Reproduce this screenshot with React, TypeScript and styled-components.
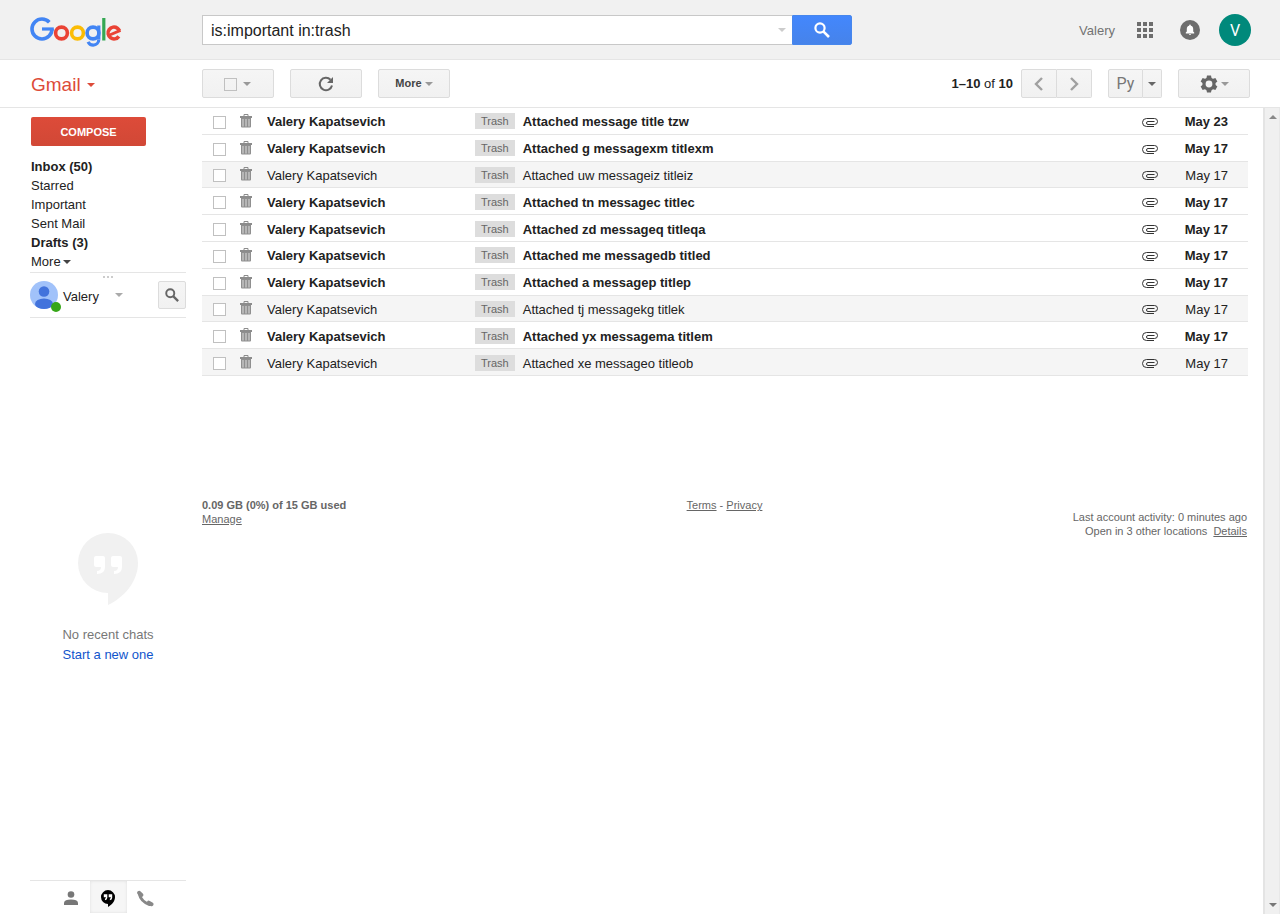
import React from 'react';
import styled, { createGlobalStyle, css } from 'styled-components';

const GlobalStyle = createGlobalStyle`
  *, *::before, *::after { box-sizing: border-box; }
  body {
    margin: 0;
    background: #fff;
    color: #222;
    font-family: Arial, "Liberation Sans", sans-serif;
    font-size: 13px;
    line-height: 19px;
  }
  button, input { font: inherit; color: inherit; margin: 0; }
  button { cursor: pointer; }
  svg { display: block; flex: none; }
`;

const Page = styled.div`
  min-height: 100vh;
  display: flex;
  flex-direction: column;
`;

const TopBar = styled.header`
  display: flex;
  align-items: center;
  height: 60px;
  background: #f1f1f1;
  border-bottom: 1px solid #e5e5e5;
`;

const Brand = styled.div`
  flex: none;
  width: 202px;
  padding-left: 30px;
`;

const LogoLink = styled.a`
  display: flex;
  padding-top: 4px;
`;

const SearchForm = styled.form`
  display: flex;
  flex: 0 1 650px;
  height: 30px;
`;

const SearchField = styled.div`
  flex: 1;
  display: flex;
  align-items: center;
  background: #fff;
  border: 1px solid #c8c8c8;
  border-right: 0;
`;

const SearchInput = styled.input`
  flex: 1;
  min-width: 0;
  height: 28px;
  padding: 2px 8px 0;
  border: 0;
  outline: 0;
  background: transparent;
  font-size: 16px;
`;

const BareButton = styled.button`
  display: flex;
  align-items: center;
  justify-content: center;
  padding: 0 6px;
  border: 0;
  background: none;
`;

const SearchButton = styled.button`
  display: flex;
  align-items: center;
  justify-content: center;
  width: 60px;
  padding: 0;
  border: 1px solid #4787ed;
  border-radius: 0 2px 2px 0;
  background: linear-gradient(#4387fd, #4683ea);
`;

const Account = styled.div`
  display: flex;
  align-items: center;
  margin-left: auto;
  padding-right: 29px;
`;

const AccountName = styled.a`
  margin-right: 22px;
  padding-top: 2px;
  color: #737373;
  text-decoration: none;
`;

const IconButton = styled.button<{ $gap: number }>`
  display: flex;
  padding: 0;
  border: 0;
  background: none;
  margin-right: ${p => p.$gap}px;
`;

const Avatar = styled.button`
  width: 32px;
  height: 32px;
  padding: 1px 0 0;
  border: 0;
  border-radius: 50%;
  background: #00897b;
  color: #fff;
  font-family: Roboto, sans-serif;
  font-size: 16px;
`;

const Caret = styled.span<{ $color?: string }>`
  display: inline-block;
  width: 0;
  height: 0;
  border: 4px solid transparent;
  border-top-color: ${p => p.$color ?? '#999'};
  border-bottom: 0;
`;

const Toolbar = styled.div`
  display: flex;
  align-items: center;
  height: 48px;
  border-bottom: 1px solid #e5e5e5;
  padding-right: 30px;
`;

const ProductButton = styled.button`
  display: flex;
  align-items: center;
  gap: 6px;
  padding: 2px 1px 0;
  border: 0;
  background: none;
  color: #dd4b39;
  font-size: 19px;
`;

const buttonFace = css`
  display: flex;
  align-items: center;
  justify-content: center;
  height: 29px;
  padding: 0;
  border: 1px solid #dcdcdc;
  border-radius: 2px;
  background: linear-gradient(#f5f5f5, #f1f1f1);
  color: #444;
`;

const Tools = styled.div`
  display: flex;
  gap: 16px;
`;

const ToolButton = styled.button`
  ${buttonFace}
  width: 72px;
  gap: 3px;
  font-size: 11px;
  font-weight: bold;
`;

const SelectAll = styled.div`
  ${buttonFace}
  width: 72px;
  padding: 1px 0 0 5px;
`;

const Check = styled.input.attrs({ type: 'checkbox' })<{ $clear?: boolean }>`
  appearance: none;
  display: block;
  width: 13px;
  height: 13px;
  border: 1px solid #c0c0c0;
  background: ${p => (p.$clear ? 'transparent' : '#fff')};
`;

const RightTools = styled.div`
  display: flex;
  align-items: center;
  gap: 16px;
  margin-left: auto;
`;

const Pager = styled.div`
  display: flex;
  align-items: center;
`;

const Range = styled.span`
  margin-right: 8px;
`;

const Segment = styled.button<{ $side: 'left' | 'right'; $width: number }>`
  ${buttonFace}
  width: ${p => p.$width}px;
  font-family: Roboto, sans-serif;
  font-size: 16px;
  color: #777;
  ${p => p.$side === 'left'
    ? 'border-radius: 2px 0 0 2px;'
    : 'border-radius: 0 2px 2px 0; border-left: 0;'}
`;

const Body = styled.div`
  flex: 1;
  display: flex;
`;

const Sidebar = styled.aside`
  flex: none;
  width: 202px;
  padding: 9px 16px 0 30px;
  display: flex;
  flex-direction: column;
`;

const Compose = styled.button`
  width: 115px;
  height: 29px;
  margin-left: 1px;
  padding: 1px 0 0;
  border: 0;
  border-radius: 2px;
  background: linear-gradient(#dd4b39, #d14836);
  color: #fff;
  font-size: 11px;
  font-weight: bold;
`;

const Folders = styled.nav`
  display: flex;
  flex-direction: column;
  align-items: flex-start;
  padding: 11px 1px 1px;
  border-bottom: 1px solid #e5e5e5;
`;

const Folder = styled.a<{ $bold?: boolean }>`
  color: #222;
  text-decoration: none;
  font-weight: ${p => (p.$bold ? 'bold' : 'normal')};
`;

const MoreFolders = styled.button`
  display: flex;
  align-items: center;
  gap: 2px;
  padding: 0;
  border: 0;
  background: none;
`;

const Grip = styled.div`
  display: flex;
  justify-content: center;
  gap: 2px;
  padding-top: 3px;
  height: 8px;

  span { width: 2px; height: 2px; background: #ccc; }
`;

const ChatHead = styled.div`
  display: flex;
  align-items: center;
  padding-bottom: 8px;
  border-bottom: 1px solid #e5e5e5;
`;

const ChatUser = styled.button`
  display: flex;
  align-items: center;
  gap: 5px;
  padding: 0;
  border: 0;
  background: none;
`;

const Face = styled.span`
  position: relative;
`;

const Presence = styled.span`
  position: absolute;
  right: -3px;
  bottom: -3px;
  width: 10px;
  height: 10px;
  border-radius: 50%;
  background: #36a618;
`;

const ChatName = styled.span`
  width: 47px;
  padding-top: 2px;
  text-align: left;
`;

const ChatSearch = styled.button`
  ${buttonFace}
  width: 28px;
  height: 28px;
  margin-left: auto;
`;

const NoChats = styled.div`
  flex: 1;
  display: flex;
  flex-direction: column;
  align-items: center;
  justify-content: center;
  line-height: 20px;
  color: #777;

  p { margin: 20px 0 0; }
  a { color: #15c; text-decoration: none; }
`;

const ChatTabs = styled.div`
  display: flex;
  justify-content: center;
  height: 34px;
  padding-bottom: 1px;
  border-top: 1px solid #e5e5e5;
`;

const ChatTab = styled.button<{ $active?: boolean }>`
  display: flex;
  align-items: center;
  justify-content: center;
  width: 37px;
  padding: 2px 0 0;
  border: 0;
  background: ${p => (p.$active ? '#f6f6f6' : 'none')};
  box-shadow: ${p => (p.$active ? 'inset 0 0 3px #ddd' : 'none')};
`;

const Main = styled.main`
  flex: 1;
  min-width: 0;
  padding-right: 15px;
`;

const MailTable = styled.table`
  width: 100%;
  height: 268px;
  table-layout: fixed;
  border-collapse: separate;
  border-spacing: 0;
`;

const Row = styled.tr<{ $unread: boolean }>`
  background: ${p => (p.$unread ? '#fff' : '#f5f5f5')};
  font-weight: ${p => (p.$unread ? 'bold' : 'normal')};
`;

const Cell = styled.td<{ $align?: string }>`
  height: 26px;
  padding: 2px 0 0;
  border-bottom: 1px solid #e5e5e5;
  text-align: ${p => p.$align ?? 'left'};
  white-space: nowrap;
  overflow: hidden;
  text-overflow: ellipsis;
`;

const CheckCell = styled(Cell)`
  padding: 3px 0 0 11px;
`;

const TrashCell = styled(Cell)`
  padding: 0;
`;

const ClipCell = styled(Cell)`
  padding: 3px 0 0 2px;
`;

const DateCell = styled(Cell)`
  padding-right: 20px;
`;

const Label = styled.span`
  display: inline-block;
  height: 16px;
  margin-right: 8px;
  padding: 0 6px;
  background: #ddd;
  color: #666;
  font-size: 11px;
  font-weight: normal;
  line-height: 16px;
  vertical-align: 1px;
`;

const Footer = styled.footer`
  display: grid;
  grid-template-columns: 1fr 1fr 1fr;
  margin-top: 122px;
  padding-right: 1px;
  font-size: 11px;
  line-height: 14px;
  color: #666;

  a { color: #666; }
  > :nth-child(2) { text-align: center; }
  > :nth-child(3) { text-align: right; padding-top: 12px; }
`;

const ScrollTrack = styled.div`
  display: flex;
  flex-direction: column;
  justify-content: space-between;
  align-items: center;
  width: 17px;
  padding: 7px 0 7px 1px;
  background: #f0f0f0;
  border-left: 2px solid #e4e4e4;
  border-right: 1px solid #e8e8e8;
`;

const CaretUp = styled(Caret)`
  transform: rotate(180deg);
`;

/* The wordmark is built from stroked rings and bars. */
const GoogleLogo = () => (
  <svg width="92" height="32" viewBox="0 0 92 32" fill="none" strokeWidth="3.6" role="img" aria-label="Google">
    <circle cx="12" cy="13" r="10" stroke="#4285f4" pathLength="360" strokeDasharray="317 43" />
    <line x1="12" y1="13" x2="23.8" y2="13" stroke="#4285f4" strokeWidth="3.2" />
    <circle cx="31.5" cy="17" r="5.900" stroke="#ea4335" />
    <circle cx="47.500" cy="17" r="5.900" stroke="#fbbc05" />
    <circle cx="63" cy="17" r="5.900" stroke="#4285f4" />
    <line x1="68.800" y1="9.500" x2="68.800" y2="23.500" stroke="#4285f4" strokeWidth="3.200" />
    <circle cx="63.200" cy="23.500" r="5.600" stroke="#4285f4" strokeWidth="3.200" pathLength="360" strokeDasharray="155 205" />
    <line x1="73.800" y1="2" x2="73.800" y2="24.500" stroke="#34a853" strokeWidth="3.200" />
    <circle cx="84" cy="17" r="5.900" stroke="#ea4335" pathLength="360" strokeDasharray="302 58" transform="rotate(35 84 17)" />
    <line x1="79" y1="19.200" x2="90.500" y2="14.400" stroke="#ea4335" strokeWidth="2.800" />
  </svg>
);

const SearchIcon = ({ size, color }: { size: number; color: string }) => (
  <svg width={size} height={size} viewBox="0 0 16 16" fill="none" stroke={color}>
    <circle cx="6" cy="6" r="4.600" strokeWidth="2.200" />
    <path d="M9.300 9.300 15 15" strokeWidth="2.600" />
  </svg>
);

const AppsIcon = () => (
  <svg width="16" height="16" viewBox="0 0 16 16" fill="#6e6e6e">
    {[0, 6, 12].map(y => [0, 6, 12].map(x => <rect key={`${x}-${y}`} x={x} y={y} width="4" height="4" />))}
  </svg>
);

const BellIcon = () => (
  <svg width="20" height="20" viewBox="0 0 20 20">
    <circle cx="10" cy="10" r="10" fill="#6e6e6e" />
    <path d="M5.800 13.500v-.9l1-1V9c0-1.800.9-2.900 2.400-3.200V5.200a.8.8 0 0 1 1.600 0v.6c1.500.3 2.400 1.400 2.400 3.200v2.600l1 1v.9z" fill="#fff" />
    <path d="M9 14h2a1 1 0 0 1-2 0z" fill="#fff" />
  </svg>
);

const RefreshIcon = () => (
  <svg width="16" height="16" viewBox="0 0 16 16">
    <path d="M14 9.500A6.200 6.200 0 1 1 12.500 3.800" fill="none" stroke="#666" strokeWidth="2" />
    <path d="M15 1v6H9z" fill="#666" />
  </svg>
);

const Chevron = ({ flip }: { flip?: boolean }) => (
  <svg width="10" height="14" viewBox="0 0 10 14" fill="none" stroke="#a0a0a0" strokeWidth="2.400">
    <path d={flip ? 'M2 1l6 6-6 6' : 'M8 1L2 7l6 6'} />
  </svg>
);

const GearIcon = () => (
  <svg width="18" height="18" viewBox="0 0 18 18">
    <circle cx="9" cy="9" r="5" fill="none" stroke="#666" strokeWidth="3.200" />
    <g fill="#666">
      {[0, 60, 120, 180, 240, 300].map(a => (
        <path key={a} d="M6.400 3.600 7 .5h4l.6 3.100z" transform={`rotate(${a} 9 9)`} />
      ))}
    </g>
  </svg>
);

const TrashIcon = () => (
  <svg width="12" height="14" viewBox="0 0 12 14">
    <path d="M4 2V.5h4V2" fill="none" stroke="#8c8c8c" />
    <path d="M0 2h12v2H0z" fill="#8c8c8c" />
    <path d="M1 4h10v8.500q0 1-1 1H2q-1 0-1-1z" fill="#8f8f8f" />
    <path d="M3 5v7.500M6 5v7.500M9 5v7.500" stroke="#c4c4c4" strokeWidth="1.500" />
  </svg>
);

const ClipIcon = () => (
  <svg width="16" height="9" viewBox="0 0 16 9" fill="none" stroke="#333">
    <path d="M12 8.500H4.500a4 4 0 0 1 0-8h8a3 3 0 0 1 0 6H6a1.500 1.500 0 0 1 0-3h6.500" />
  </svg>
);

const UserIcon = () => (
  <svg width="28" height="28" viewBox="0 0 28 28">
    <defs><clipPath id="face"><circle cx="14" cy="14" r="14" /></clipPath></defs>
    <g clipPath="url(#face)">
      <rect width="28" height="28" fill="#a1c2fa" />
      <circle cx="14" cy="10.500" r="5.300" fill="#4273dc" />
      <ellipse cx="14" cy="23" rx="9" ry="5.500" fill="#4273dc" />
    </g>
  </svg>
);

const bubble = 'M30 0a30 30 0 0 0 0 60v12C47 64 60 48 60 30A30 30 0 0 0 30 0z';

const HangoutsLogo = () => (
  <svg width="60" height="72" viewBox="0 0 60 72">
    <path d={bubble} fill="#f1f1f1" />
    <path
      d="M18 23h7q2 0 2 2v9q0 7-8 7v-3q4 0 4-4h-5q-2 0-2-2v-7q0-2 2-2zM35 23h7q2 0 2 2v9q0 7-8 7v-3q4 0 4-4h-5q-2 0-2-2v-7q0-2 2-2z"
      fill="#fff"
    />
  </svg>
);

const HangoutsIcon = () => (
  <svg width="14" height="17" viewBox="0 0 60 72">
    <path d={bubble} fill="#000" />
    <path d="M12 18h15v15q0 9-10 10v-6q4-1 4-6h-9zM33 18h15v15q0 9-10 10v-6q4-1 4-6h-9z" fill="#fff" />
  </svg>
);

const PersonIcon = () => (
  <svg width="14" height="14" viewBox="0 0 14 14" fill="#777">
    <circle cx="7" cy="3.500" r="3.300" />
    <path d="M0 14v-2.200Q.5 8.500 7 8.500t7 3.300V14z" />
  </svg>
);

const PhoneIcon = () => (
  <svg width="17" height="17" viewBox="0 0 17 17" fill="none" stroke="#888" strokeLinecap="round">
    <path d="M2.500 4.500Q4 11.500 12.500 14.500" strokeWidth="3" />
    <path d="M2.200 2.800 4.300 5M11.800 12.700l2.700 1.500" strokeWidth="4" />
  </svg>
);

const folders = [
  { name: 'Inbox (50)', bold: true },
  { name: 'Starred' },
  { name: 'Important' },
  { name: 'Sent Mail' },
  { name: 'Drafts (3)', bold: true },
];

const mails = [
  { title: 'Attached message title tzw', date: 'May 23', unread: true },
  { title: 'Attached g messagexm titlexm', date: 'May 17', unread: true },
  { title: 'Attached uw messageiz titleiz', date: 'May 17', unread: false },
  { title: 'Attached tn messagec titlec', date: 'May 17', unread: true },
  { title: 'Attached zd messageq titleqa', date: 'May 17', unread: true },
  { title: 'Attached me messagedb titled', date: 'May 17', unread: true },
  { title: 'Attached a messagep titlep', date: 'May 17', unread: true },
  { title: 'Attached tj messagekg titlek', date: 'May 17', unread: false },
  { title: 'Attached yx messagema titlem', date: 'May 17', unread: true },
  { title: 'Attached xe messageo titleob', date: 'May 17', unread: false },
];

const CheckCol = styled.col`width: 38px;`;
const TrashCol = styled.col`width: 27px;`;
const SenderCol = styled.col`width: 208px;`;
const ClipCol = styled.col`width: 24px;`;
const DateCol = styled.col`width: 84px;`;

export default function App() {
  return (
    <Page>
      <GlobalStyle />
      <TopBar>
        <Brand><LogoLink href="#" aria-label="Google"><GoogleLogo /></LogoLink></Brand>
        <SearchForm onSubmit={e => e.preventDefault()}>
          <SearchField>
            <SearchInput aria-label="Search mail" defaultValue="is:important in:trash" />
            <BareButton type="button" aria-label="Show search options"><Caret $color="#ccc" /></BareButton>
          </SearchField>
          <SearchButton aria-label="Search"><SearchIcon size={16} color="#fff" /></SearchButton>
        </SearchForm>
        <Account>
          <AccountName href="#">Valery</AccountName>
          <IconButton $gap={27} aria-label="Apps"><AppsIcon /></IconButton>
          <IconButton $gap={19} aria-label="Notifications"><BellIcon /></IconButton>
          <Avatar aria-label="Account">V</Avatar>
        </Account>
      </TopBar>

      <Toolbar>
        <Brand>
          <ProductButton>Gmail <Caret $color="#dd4b39" /></ProductButton>
        </Brand>
        <Tools>
          <SelectAll>
            <Check $clear aria-label="Select all" />
            <BareButton aria-label="Select options"><Caret /></BareButton>
          </SelectAll>
          <ToolButton aria-label="Refresh"><RefreshIcon /></ToolButton>
          <ToolButton>More <Caret /></ToolButton>
        </Tools>
        <RightTools>
          <Pager>
            <Range><b>1–10</b> of <b>10</b></Range>
            <Segment $side="left" $width={36} aria-label="Newer"><Chevron /></Segment>
            <Segment $side="right" $width={35} aria-label="Older"><Chevron flip /></Segment>
          </Pager>
          <Pager>
            <Segment $side="left" $width={35}>Ру</Segment>
            <Segment $side="right" $width={19} aria-label="Input tools"><Caret $color="#666" /></Segment>
          </Pager>
          <ToolButton aria-label="Settings"><GearIcon /><Caret /></ToolButton>
        </RightTools>
      </Toolbar>

      <Body>
        <Sidebar>
          <Compose>COMPOSE</Compose>
          <Folders>
            {folders.map(f => <Folder key={f.name} href="#" $bold={f.bold}>{f.name}</Folder>)}
            <MoreFolders>More <Caret $color="#444" /></MoreFolders>
          </Folders>
          <Grip><span /><span /><span /></Grip>
          <ChatHead>
            <ChatUser>
              <Face><UserIcon /><Presence /></Face>
              <ChatName>Valery</ChatName>
              <Caret $color="#aaa" />
            </ChatUser>
            <ChatSearch aria-label="Search people"><SearchIcon size={14} color="#666" /></ChatSearch>
          </ChatHead>
          <NoChats>
            <HangoutsLogo />
            <p>No recent chats</p>
            <a href="#">Start a new one</a>
          </NoChats>
          <ChatTabs>
            <ChatTab aria-label="Contacts"><PersonIcon /></ChatTab>
            <ChatTab $active aria-label="Conversations"><HangoutsIcon /></ChatTab>
            <ChatTab aria-label="Phone calls"><PhoneIcon /></ChatTab>
          </ChatTabs>
        </Sidebar>

        <Main>
          <MailTable>
            <colgroup>
              <CheckCol />
              <TrashCol />
              <SenderCol />
              <col />
              <ClipCol />
              <DateCol />
            </colgroup>
            <tbody>
              {mails.map(m => (
                <Row key={m.title} $unread={m.unread}>
                  <CheckCell><Check aria-label={m.title} /></CheckCell>
                  <TrashCell><TrashIcon /></TrashCell>
                  <Cell>Valery Kapatsevich</Cell>
                  <Cell><Label>Trash</Label>{m.title}</Cell>
                  <ClipCell><ClipIcon /></ClipCell>
                  <DateCell $align="right">{m.date}</DateCell>
                </Row>
              ))}
            </tbody>
          </MailTable>
          <Footer>
            <div><b>0.09 GB (0%) of 15 GB used</b><br /><a href="#">Manage</a></div>
            <div><a href="#">Terms</a> - <a href="#">Privacy</a></div>
            <div>Last account activity: 0 minutes ago<br />Open in 3 other locations &nbsp;<a href="#">Details</a></div>
          </Footer>
        </Main>
        <ScrollTrack aria-hidden>
          <CaretUp $color="#888" />
          <Caret $color="#777" />
        </ScrollTrack>
      </Body>
    </Page>
  );
}
